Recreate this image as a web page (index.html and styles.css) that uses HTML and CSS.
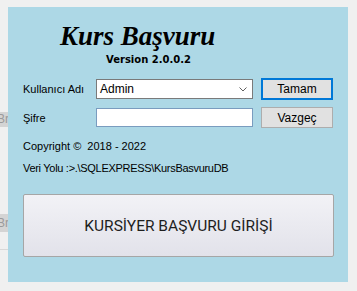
FILE: index.html
```html
<!DOCTYPE html>
<html lang="en">

<head>
    <meta charset="UTF-8">
    <title>Kurs Başvuru</title>
    <link rel="stylesheet" href="styles.css">
</head>

<body>
    <div class="side">
        <div class="ghost_btn first">Br</div>
        <div class="ghost_btn second">Br</div>
        <div class="ghost_line"></div>
    </div>

    <div class="main_panel">
        <h1 class="title">Kurs Başvuru</h1>
        <div class="version">Version 2.0.0.2</div>

        <div class="login_form">
            <label class="lbl">Kullanıcı Adı</label>
            <div class="combo">
                <span>Admin</span>
                <svg width="8" height="5" viewBox="0 0 8 5">
                    <path d="M0.5 0.5 L4 4 L7.5 0.5" fill="none" stroke="#606060" stroke-width="1"/>
                </svg>
            </div>
            <button class="win_btn default_btn">Tamam</button>

            <label class="lbl">Şifre</label>
            <div class="pass_box"></div>
            <button class="win_btn">Vazgeç</button>
        </div>

        <div class="info">Copyright ©&nbsp; 2018 - 2022</div>
        <div class="info path">Veri Yolu :&gt;.\SQLEXPRESS\KursBasvuruDB</div>

        <button class="big_btn">KURSİYER BAŞVURU GİRİŞİ</button>
    </div>
</body>

</html>
```

FILE: styles.css
```css
* {
    margin: 0;
    padding: 0;
    box-sizing: border-box;
}

body {
    background-color: #f0f0f0;
    width: 357px;
    height: 291px;
    display: flex;
    font-family: "Liberation Sans", Arial, sans-serif;
    font-size: 11px;
    color: #000;
    overflow: hidden;
}

/* bits of the window behind */
.side {
    width: 8px;
    overflow: hidden;
}

.ghost_btn {
    width: 8px;
    height: 15px;
    background-color: #d4d4d4;
    color: #9a9a9a;
    font-size: 12px;
    line-height: 15px;
    text-indent: -3px;
    overflow: hidden;
    white-space: nowrap;
}

.ghost_btn.first {
    margin-top: 112px;
}

.ghost_btn.second {
    margin-top: 87px;
    height: 18px;
    line-height: 18px;
}

.ghost_line {
    margin-top: 17px;
    height: 1px;
    background-color: #d8d8d8;
}

.main_panel {
    margin-top: 7px;
    width: 340px;
    height: 275px;
    background-color: #add8e6;
    padding: 0 15px;
    display: flex;
    flex-direction: column;
}

.title {
    font-family: "Liberation Serif", "Times New Roman", serif;
    font-style: italic;
    font-weight: bold;
    font-size: 27px;
    line-height: 30px;
    margin-top: 14px;
    margin-left: 37px;
    color: #000;
}

.version {
    font-family: "DejaVu Sans", Verdana, sans-serif;
    font-weight: bold;
    font-size: 10px;
    line-height: 12px;
    margin-top: 3px;
    margin-left: 83px;
}

.login_form {
    display: grid;
    grid-template-columns: 65px 157px 72px;
    column-gap: 8px;
    row-gap: 7px;
    align-items: center;
    margin-top: 12px;
}

.lbl {
    line-height: 14px;
}

.combo {
    height: 20px;
    background-color: #fff;
    border: 1px solid #7a7a7a;
    display: flex;
    align-items: center;
    justify-content: space-between;
    padding: 0 5px 0 3px;
    font-size: 12px;
}

.pass_box {
    height: 19px;
    background-color: #fff;
    border: 1px solid #7a9cbf;
}

.win_btn {
    height: 21px;
    background-color: #e1e1e1;
    border: 1px solid #adadad;
    font-family: "Liberation Sans", Arial, sans-serif;
    font-size: 12px;
    color: #000;
}

.default_btn {
    height: 22px;
    border: 2px solid #0078d7;
}

.info {
    line-height: 14px;
    margin-top: 8px;
}

.login_form + .info {
    margin-top: 11px;
}

.path {
    letter-spacing: -0.3px;
}

.big_btn {
    margin-top: 19px;
    height: 63px;
    width: 311px;
    border: 1px solid #a6a6a6;
    border-radius: 2px;
    background: linear-gradient(#f2f2f6, #e2e2ea);
    font-family: Roboto, "Liberation Sans", sans-serif;
    font-size: 15.5px;
    color: #1e1e1e;
}
```
